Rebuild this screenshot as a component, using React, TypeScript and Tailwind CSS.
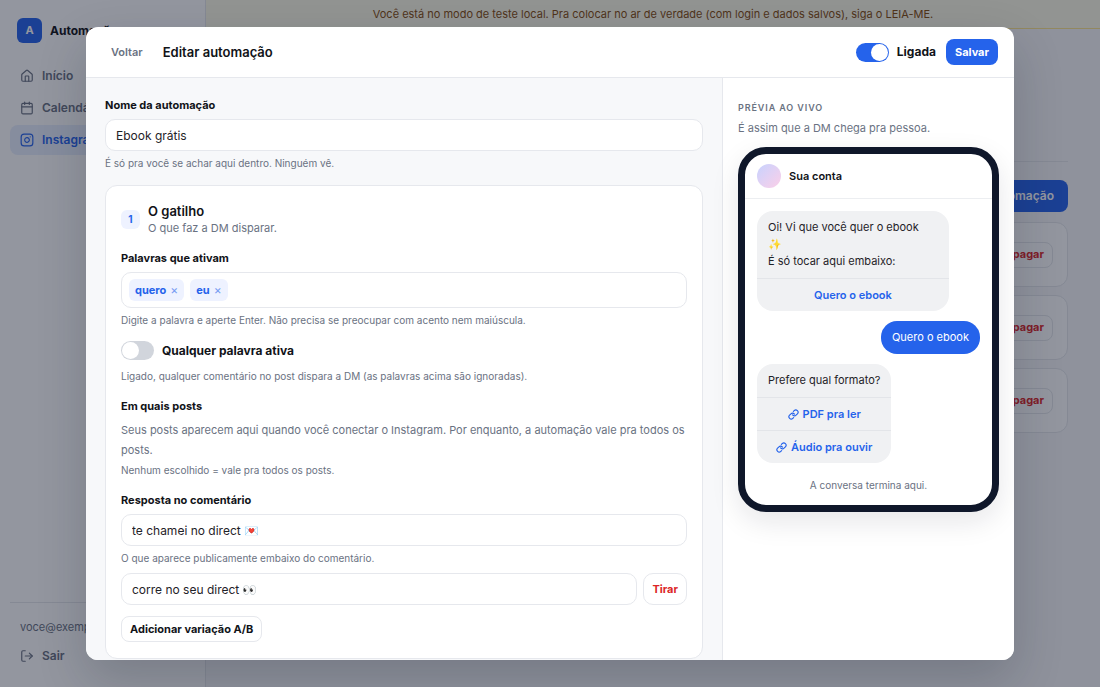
import React, { useState } from 'react';
import { Calendar, House, Instagram, LogOut } from 'lucide-react';

interface FieldLabelProps {
  htmlFor?: string;
  children: React.ReactNode;
}

const FieldLabel: React.FC<FieldLabelProps> = ({ htmlFor, children }) => (
  <label htmlFor={htmlFor} className="mb-1.5 block text-[11px] leading-4 font-bold text-[#111318]">
    {children}
  </label>
);

const Hint: React.FC<{ children: React.ReactNode }> = ({ children }) => (
  <p className="mt-1 text-[10px] leading-4 text-gray-500">{children}</p>
);

interface SwitchProps {
  label: string;
  checked: boolean;
  onChange: (value: boolean) => void;
}

const Switch: React.FC<SwitchProps> = ({ label, checked, onChange }) => (
  <label className="flex items-center gap-2 text-xs leading-4 font-bold text-[#111318]">
    <input
      type="checkbox"
      role="switch"
      checked={checked}
      onChange={(e) => onChange(e.target.checked)}
      className="h-[19px] w-[33px] shrink-0 appearance-none rounded-full bg-gray-300 p-px before:block before:size-[17px] before:rounded-full before:bg-white checked:bg-[#2563eb] checked:before:translate-x-3.5"
    />
    {label}
  </label>
);

const inputClass =
  'h-8 w-full min-w-0 rounded-[10px] border border-[#e6e8ed] bg-white px-2.5 text-xs text-[#1f2228] outline-none';

const navItems = [
  { label: 'Início', icon: House, active: false },
  { label: 'Calendário', icon: Calendar, active: false },
  { label: 'Instagram', icon: Instagram, active: true },
];

const Sidebar: React.FC = () => (
  <aside className="flex w-[206px] shrink-0 flex-col border-r border-gray-200 bg-white px-2.5 pt-[18px] pb-4">
    <div className="mb-[18px] flex items-center gap-2 pl-[7px]">
      <span className="flex size-[25px] items-center justify-center rounded-md bg-[#2563eb] text-[11px] font-bold text-white">
        A
      </span>
      <span className="text-xs font-bold text-[#111318]">Automações</span>
    </div>
    <nav className="flex flex-col gap-0.5">
      {navItems.map(({ label, icon: Icon, active }) => (
        <a
          key={label}
          href="#"
          className={`flex h-[30px] items-center gap-2 rounded-lg px-2.5 text-xs font-semibold ${
            active ? 'bg-[#e8eefe] text-[#2563eb]' : 'text-gray-500'
          }`}
        >
          <Icon size={14} strokeWidth={2} />
          {label}
        </a>
      ))}
    </nav>
    <div className="mt-auto border-t border-gray-200 pt-4">
      <p className="px-2.5 text-[11px] leading-4 text-gray-500">voce@exemplo.com</p>
      <button className="mt-1.5 flex h-[30px] items-center gap-2 px-2.5 text-xs font-semibold text-gray-500">
        <LogOut size={14} />
        Sair
      </button>
    </div>
  </aside>
);

const MainPage: React.FC = () => (
  <div className="flex h-full bg-[#f7f8fa]">
    <Sidebar />
    <main className="min-w-0 flex-1">
      <p className="flex h-[29px] items-center justify-center border-b border-[#fde68a] bg-[#fefce8] text-[11px] text-[#854d0e]">
        Você está no modo de teste local. Pra colocar no ar de verdade (com login e dados salvos), siga o LEIA-ME.
      </p>
      <div className="px-8 pt-8">
        <div className="h-[101px] border-b border-gray-200" />
        <div className="mt-[18px] mb-2.5 flex justify-end">
          <button className="h-8 rounded-lg bg-[#2563eb] px-3.5 text-xs font-semibold text-white">
            Nova automação
          </button>
        </div>
        <div className="flex flex-col gap-2">
          {[1, 2, 3].map((id) => (
            <div
              key={id}
              className="flex h-[65px] items-center justify-end rounded-xl border border-gray-200 bg-white px-3.5"
            >
              <button className="h-[26px] rounded-lg border border-gray-200 px-2 text-[11px] font-bold text-[#dc2626]">
                Apagar
              </button>
            </div>
          ))}
        </div>
      </div>
    </main>
  </div>
);

// Two open chain loops on the diagonal
const ChainIcon: React.FC = () => (
  <svg
    width="11"
    height="11"
    viewBox="0 0 24 24"
    fill="none"
    stroke="currentColor"
    strokeWidth="2.5"
    strokeLinecap="round"
    strokeLinejoin="round"
    aria-hidden="true"
  >
    <path d="M10 13a5 5 0 0 0 7.540.540l3-3a5 5 0 0 0-7.070-7.070l-1.720 1.710" />
    <path d="M14 11a5 5 0 0 0-7.540-.540l-3 3a5 5 0 0 0 7.070 7.070l1.710-1.710" />
  </svg>
);

interface BubbleProps {
  children: React.ReactNode;
  actions: string[];
  withLink?: boolean;
  wide?: boolean;
}

const Bubble: React.FC<BubbleProps> = ({ children, actions, withLink, wide }) => (
  <div
    className={`self-start overflow-hidden rounded-2xl bg-[#f0f1f3] text-[11px] text-[#1f2228] ${
      wide ? 'w-[86%]' : 'max-w-[86%]'
    }`}
  >
    <p className="px-[11px] py-2 leading-[17px]">{children}</p>
    {actions.map((action) => (
      <a
        key={action}
        href="#"
        className="flex h-[33px] items-center justify-center gap-1 border-t border-[#e3e5e9] font-semibold text-[#2563eb]"
      >
        {withLink && <ChainIcon />}
        {action}
      </a>
    ))}
  </div>
);

const Preview: React.FC = () => (
  <aside className="w-[292px] shrink-0 border-l border-[#e6e8ed] bg-white px-[15px] pt-[22px]">
    <h3 className="text-[9px] leading-4 font-semibold tracking-widest text-gray-500">PRÉVIA AO VIVO</h3>
    <p className="mt-1 mb-[11px] text-[11px] leading-4 text-gray-500">É assim que a DM chega pra pessoa.</p>
    <div className="overflow-hidden rounded-[28px] border-[7px] border-[#0f172a] bg-white shadow-[0_10px_28px_rgba(15,23,42,0.10)]">
      <div className="flex h-[45px] items-center gap-2 border-b border-[#eceef1] px-3">
        <span className="size-6 rounded-full bg-linear-to-br from-[#c7d2fe] to-[#fbcfe8]" />
        <span className="text-[11px] font-semibold text-[#111318]">Sua conta</span>
      </div>
      <div className="flex flex-col gap-2.5 p-3">
        <Bubble actions={['Quero o ebook']} wide>
          Oi! Vi que você quer o ebook
          <br />✨<br />É só tocar aqui embaixo:
        </Bubble>
        <p className="self-end rounded-2xl bg-[#2563eb] px-[11px] py-2 text-[11px] leading-[17px] text-white">
          Quero o ebook
        </p>
        <Bubble actions={['PDF pra ler', 'Áudio pra ouvir']} withLink>
          Prefere qual formato?
        </Bubble>
        <p className="mt-1 text-center text-[10px] leading-4 text-gray-500">A conversa termina aqui.</p>
      </div>
    </div>
  </aside>
);

const TriggerCard: React.FC = () => {
  const [words, setWords] = useState(['quero', 'eu']);
  const [anyWord, setAnyWord] = useState(false);

  return (
    <section className="mt-3.5 rounded-xl border border-[#e6e8ed] bg-white px-[15px] py-4">
      <div className="mb-3.5 flex items-center gap-2">
        <span className="flex size-[19px] items-center justify-center rounded-md bg-[#eef2ff] text-[10px] font-bold text-[#2563eb]">
          1
        </span>
        <div>
          <h3 className="text-[13px] leading-[18px] font-semibold text-[#111318]">O gatilho</h3>
          <p className="text-[11px] leading-4 text-gray-500">O que faz a DM disparar.</p>
        </div>
      </div>

      <FieldLabel htmlFor="words">Palavras que ativam</FieldLabel>
      <div className="flex h-9 items-center gap-1.5 rounded-[10px] border border-[#e6e8ed] px-[7px]">
        {words.map((word) => (
          <span
            key={word}
            className="flex h-[22px] items-center gap-1 rounded-md bg-[#eef2ff] px-1.5 text-[11px] font-bold text-[#2563eb]"
          >
            {word}
            <button
              aria-label={`Tirar ${word}`}
              className="text-xs font-normal opacity-60"
              onClick={() => setWords(words.filter((w) => w !== word))}
            >
              ×
            </button>
          </span>
        ))}
        <input id="words" className="min-w-0 flex-1 text-xs outline-none" />
      </div>
      <Hint>Digite a palavra e aperte Enter. Não precisa se preocupar com acento nem maiúscula.</Hint>

      <div className="mt-[13px] mb-2">
        <Switch label="Qualquer palavra ativa" checked={anyWord} onChange={setAnyWord} />
      </div>
      <Hint>Ligado, qualquer comentário no post dispara a DM (as palavras acima são ignoradas).</Hint>

      <div className="mt-3.5">
        <FieldLabel>Em quais posts</FieldLabel>
        <p className="text-[11px] leading-5 text-gray-500">
          Seus posts aparecem aqui quando você conectar o Instagram. Por enquanto, a automação vale pra todos os posts.
        </p>
        <p className="text-[10px] leading-5 text-gray-500">Nenhum escolhido = vale pra todos os posts.</p>
      </div>

      <div className="mt-3">
        <FieldLabel htmlFor="reply-a">Resposta no comentário</FieldLabel>
        <input id="reply-a" className={inputClass} defaultValue="te chamei no direct 💌" />
        <Hint>O que aparece publicamente embaixo do comentário.</Hint>
        <div className="mt-[7px] flex gap-1.5">
          <input aria-label="Variação B" className={inputClass} defaultValue="corre no seu direct 👀" />
          <button className="h-8 shrink-0 rounded-[10px] border border-[#e6e8ed] px-2 text-[11px] font-bold text-[#dc2626]">
            Tirar
          </button>
        </div>
        <button className="mt-[11px] h-[26px] rounded-lg border border-[#e6e8ed] px-2 text-[11px] font-bold text-[#111318]">
          Adicionar variação A/B
        </button>
      </div>
    </section>
  );
};

const EditorModal: React.FC = () => {
  const [enabled, setEnabled] = useState(true);

  return (
    <div
      role="dialog"
      aria-labelledby="editor-title"
      className="flex h-[92vh] w-full max-w-[928px] flex-col overflow-hidden rounded-xl bg-white shadow-[0_20px_50px_rgba(15,23,42,0.20)]"
    >
      <header className="flex h-[51px] shrink-0 items-center border-b border-[#e6e8ed] pr-4 pl-[25px]">
        <button className="mr-5 text-[11px] font-semibold text-gray-500">Voltar</button>
        <h2 id="editor-title" className="text-[13px] font-semibold text-[#111318]">
          Editar automação
        </h2>
        <div className="ml-auto flex items-center gap-2.5">
          <Switch label="Ligada" checked={enabled} onChange={setEnabled} />
          <button className="h-[26px] rounded-lg bg-[#2563eb] px-[9px] text-[11px] font-bold text-white">
            Salvar
          </button>
        </div>
      </header>
      <div className="flex min-h-0 flex-1">
        <div className="min-w-0 flex-1 overflow-y-auto bg-[#f7f8fa] px-[19px] py-[19px] [scrollbar-width:none]">
          <FieldLabel htmlFor="name">Nome da automação</FieldLabel>
          <input id="name" className={inputClass} defaultValue="Ebook grátis" />
          <Hint>É só pra você se achar aqui dentro. Ninguém vê.</Hint>
          <TriggerCard />
        </div>
        <Preview />
      </div>
    </div>
  );
};

export default function App() {
  return (
    <div className="relative h-screen overflow-hidden font-['Inter','Noto_Color_Emoji',sans-serif]">
      <MainPage />
      <div className="absolute inset-0 flex items-center justify-center bg-[rgba(15,23,42,0.45)] px-4">
        <EditorModal />
      </div>
    </div>
  );
}
